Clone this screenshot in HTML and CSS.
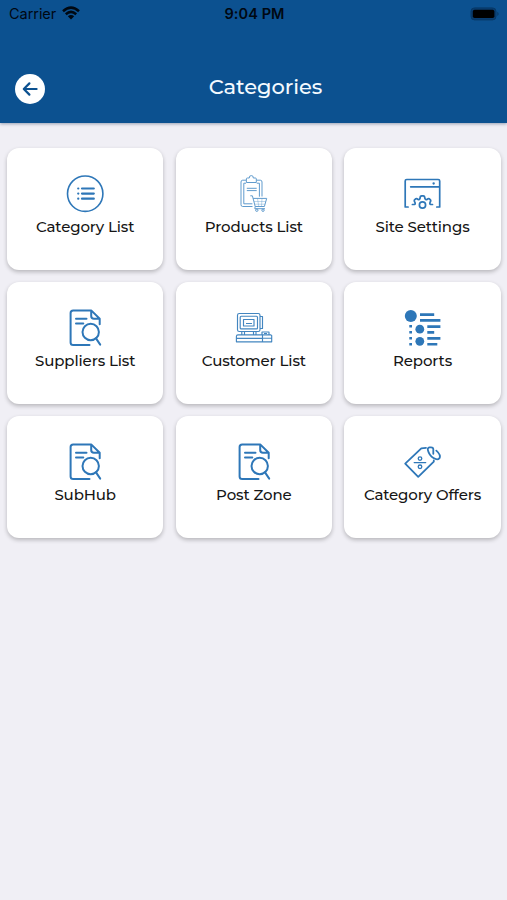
FILE: index.html
```html
<!DOCTYPE html>
<html lang="en">
<head>
<meta charset="utf-8">
<title>Categories</title>
<link rel="stylesheet" href="styles.css">
</head>
<body>
<header class="header">
  <div class="status">
    <div class="carrier"><span>Carrier</span>
      <svg class="wifi" width="18" height="14" viewBox="0 0 18 14" fill="none" stroke="#000812" stroke-width="2.5"><path d="M1 5.2Q9-2 17 5.2M3.8 8.2Q9 3.6 14.2 8.2"/><path d="M9 13.6L5.8 10.3Q9 7.8 12.2 10.3Z" fill="#000812" stroke="none"/></svg>
    </div>
    <span class="time">9:04 PM</span>
    <svg class="battery" width="30" height="14" viewBox="0 0 30 14"><rect x="1" y=".9" width="25" height="12" rx="3.5" fill="#083c70" stroke="#083966"/><rect x="2.8" y="2.8" width="21.6" height="8.3" rx="1.8" fill="#000"/><path d="M27.3 4.7Q30 6.9 27.3 9.1Z" fill="#083966"/></svg>
  </div>
  <div class="navbar">
    <button class="back" aria-label="Back"><svg width="30" height="30" viewBox="0 0 30 30" fill="none" stroke="#0c5190" stroke-width="2.2" stroke-linecap="round" stroke-linejoin="round"><path d="M21.6 15H9M14.4 9.4L8.8 15L14.4 20.6"/></svg></button>
    <h1 class="title">Categories</h1>
  </div>
</header>

<svg class="defs" width="0" height="0"><defs>
  <g id="document-search" stroke-width="2" stroke-linejoin="round" stroke-linecap="round">
    <path d="M34.5 41H18.2Q15.6 41 15.6 38.5V9Q15.6 6.4 18.2 6.4H36.2L44.7 14.8V20.3M36.2 6.4V12Q36.2 14.8 39 14.8H44.7M21 14.7H31.5M21 19.5H28.3"/>
    <circle cx="35.7" cy="28" r="8.2"/><path d="M41 34.4L45.2 40.6"/>
  </g>
</defs></svg>

<main class="grid">
  <a class="card"><svg class="icon" viewBox="0 0 60 48"><circle cx="30.2" cy="23.7" r="17.7" stroke-width="1.6"/><path stroke-width="2.2" stroke-linecap="round" d="M27 18.5H38.8M27 23.6H38.8M27 28.7H38.8M23.2 18.5H23.3M23.2 23.6H23.3M23.2 28.7H23.3"/></svg><span class="label">Category List</span></a>

  <a class="card"><svg class="icon fine" viewBox="0 0 60 48"><path d="M28.5 36.5H18.7Q17 36.5 17 34.7V12Q17 10.2 18.7 10.2H22.4V8.8Q22.4 8 23.4 8H25.3Q25 5.6 27.3 5.6Q29.6 5.6 29.3 8H31.4Q32.3 8 32.3 8.8V10.2H36.3Q38 10.2 38 12V26.5M22.4 10.2V12.5H32.3V10.2"/><path d="M22 13.2H19.8V33.8H28.4M32.8 13.2H35.4V26.7M22.8 18.3H32.7M22.8 20.6H32.7"/><path d="M26.3 25.8H28.4L31.2 36.5H40.4L42.7 28.4H29.1M31.2 36.5L30.8 38.7H41"/><path stroke-opacity=".4" d="M30 31.5H41.8M31 34.2H41M33.5 28.5L34.7 36M38 28.5L37.5 36"/><circle cx="32.8" cy="40.2" r="1.2"/><circle cx="39" cy="40.2" r="1.2"/></svg><span class="label">Products List</span></a>

  <a class="card"><svg class="icon shifted" viewBox="0 0 60 48" stroke-width="1.7" stroke-linecap="round" stroke-linejoin="round"><path d="M16.1 37H13.2V11Q13.2 9.5 14.7 9.5H46.2Q47.7 9.5 47.7 11V37H44.8M18.7 16.8H47.2"/><path stroke-width="2.3" d="M41.6 13.5H41.7"/><path d="M20.4 34.5H22.3Q23.6 34.2 23 32.5Q21.5 30.3 23 29.4Q24.4 28 26.1 29.5Q27.4 30.1 28 28.4Q28 25.8 29.8 25.8H31.2Q32.8 25.8 32.9 28.4Q33.6 30.1 35 29.5Q36.7 28 38 29.4Q39.4 30.4 38 32.5Q37.5 34.2 38.8 34.5H40.5"/><circle cx="30.5" cy="35" r="3.1"/></svg><span class="label">Site Settings</span></a>

  <a class="card"><svg class="icon" viewBox="0 0 60 48"><use href="#document-search"/></svg><span class="label">Suppliers List</span></a>

  <a class="card"><svg class="icon customer" viewBox="0 0 60 48" stroke-linejoin="round"><rect x="13.5" y="9.5" width="22.5" height="18" rx="1.8"/><rect x="16.2" y="12.2" width="17.3" height="12.7" rx="1"/><rect x="19.5" y="15.5" width="10.5" height="6.5"/><path d="M22 19.5H28M36 12.5H38.5V24.5H36M17.8 27.5V30.8M20.5 27.5V30.8M29.5 27.5V30.8M32 27.5V30.8M38 30.8H14Q12.4 30.8 12.4 32.5V37.8H47.7V31.5L46.5 30.8M12.5 34.3H38.5M38 30.8V28H45V30.8M36.8 30.8H47M38.5 31V37.5M38.5 34.2H47.5M40 29.5H43"/></svg><span class="label">Customer List</span></a>

  <a class="card"><svg class="icon shifted" viewBox="0 0 60 48"><g fill="#2e77b8" stroke="none"><circle cx="18.8" cy="12" r="6"/><circle cx="27.8" cy="25.2" r="4.4"/><circle cx="27.8" cy="37.3" r="4.4"/></g><path stroke-width="2.6" d="M28 10.6H42.2M28 16.4H48.4M35.3 22.6H48.4M35.3 28.4H42.2M35.3 34.4H48.4M35.3 40.2H45.3M17.3 22.3H20M17.3 28.3H20M17.3 34.3H20M17.3 40.3H20"/></svg><span class="label">Reports</span></a>

  <a class="card"><svg class="icon" viewBox="0 0 60 48"><use href="#document-search"/></svg><span class="label">SubHub</span></a>

  <a class="card"><svg class="icon" viewBox="0 0 60 48"><use href="#document-search"/></svg><span class="label">Post Zone</span></a>

  <a class="card"><svg class="icon shifted" viewBox="0 0 60 48" stroke-width="1.8" stroke-linecap="round" stroke-linejoin="round"><path d="M34 9.9L29.3 10.3L13.2 25.7L26.2 38.9L41.8 23.7V22.5"/><path d="M41.3 15.8V11Q41.1 9.3 39 9.3H37.5Q35.2 9.7 36 12.5Q37.2 17.3 41.5 20.1Q45.5 22.6 47.5 20.2Q49.2 17.1 44.3 12.7"/><g stroke-width="1.3"><path d="M22.2 24.6H33.7"/><circle cx="28" cy="20.6" r="1.8"/><circle cx="28" cy="28.8" r="1.8"/></g></svg><span class="label">Category Offers</span></a>
</main>
</body>
</html>
```
FILE: styles.css
```css
* { box-sizing: border-box; }
body {
  margin: 0;
  min-height: 900px;
  background: #f0eff5;
  font-family: Montserrat, Inter, sans-serif;
  color: #151515;
}
.header {
  height: 123px;
  background: #0c5190;
  box-shadow: 0 1px 3px rgba(20, 40, 80, .4);
}
.status {
  display: grid;
  grid-template-columns: 1fr auto 1fr;
  height: 28px;
  padding: 0 7px 0 9px;
  align-items: center;
  color: #000812;
  font: 400 14.5px/28px Inter, sans-serif;
}
.carrier { display: flex; align-items: center; gap: 6px; }
.carrier span { letter-spacing: -.05px; }
.wifi { margin-top: -2px; }
.time { font-weight: 600; letter-spacing: .08px; }
.battery { justify-self: end; margin-top: -1px; }
.navbar {
  display: grid;
  grid-template-columns: 30px 1fr 30px;
  align-items: center;
  height: 60px;
  margin-top: 31px;
  padding: 0 15px;
}
.back {
  width: 30px;
  height: 30px;
  padding: 0;
  border: 0;
  border-radius: 50%;
  background: #fff;
}
.back svg { display: block; }
.title {
  margin: 0 0 4px 24px;
  color: #f4faff;
  font-size: 21px;
  line-height: 28px;
  font-weight: 500;
  text-align: center;
  letter-spacing: -.05px;
}
.defs { display: block; }
.grid {
  display: grid;
  grid-template-columns: repeat(3, 1fr);
  grid-auto-rows: 122px;
  gap: 12.3px;
  padding: 24.5px 6.3px 0 7px;
}
.card {
  display: flex;
  flex-direction: column;
  align-items: center;
  padding-top: 22.2px;
  border-radius: 12px;
  background: #fff;
  box-shadow: 0 2px 4px rgba(0, 0, 0, .24);
}
.icon {
  width: 60px;
  height: 48px;
  flex: none;
  fill: none;
  stroke: #2e77b8;
}
.shifted { margin-left: -1px; }
.fine { stroke: #609bcd; stroke-width: 1; }
.customer { stroke: #4386c0; stroke-width: 1.15; }
.label {
  margin-top: -.8px;
  font-size: 15px;
  line-height: 20px;
  font-weight: 500;
  letter-spacing: -.12px;
  white-space: nowrap;
}
```
